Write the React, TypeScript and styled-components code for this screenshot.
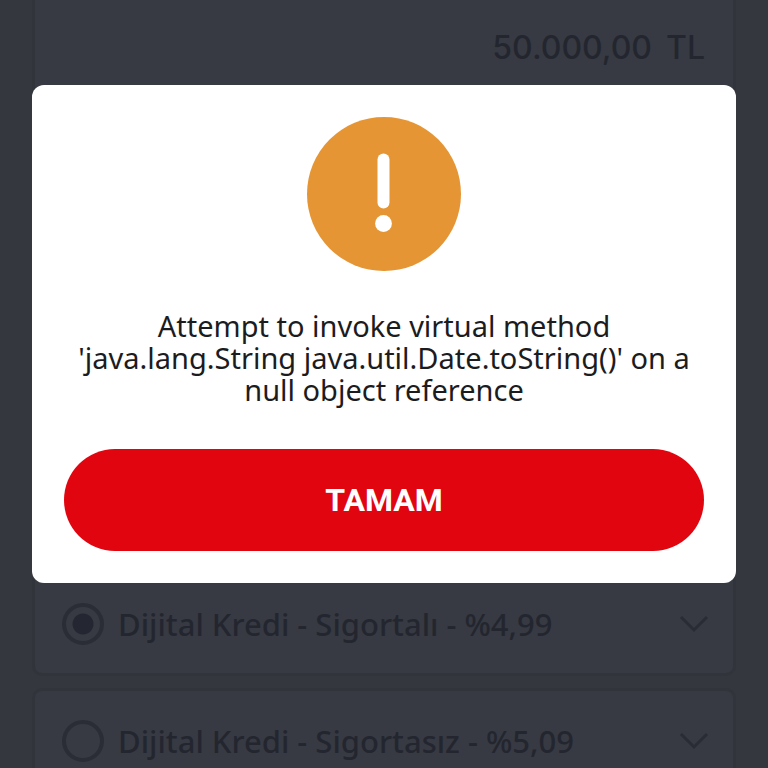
import React from "react";
import styled, { createGlobalStyle } from "styled-components";

const GlobalStyle = createGlobalStyle`
  *, *::before, *::after { box-sizing: border-box; }
  body {
    margin: 0;
    background: #35373f;
    font-family: "Noto Sans", "Open Sans", sans-serif;
  }
`;

const Screen = styled.main`
  height: 100vh;
  overflow: hidden;
  padding: 0 32px;
`;

const Card = styled.section`
  border: 3px solid #31343b;
  border-radius: 10px;
  background: #373a42;
  color: #23262f;
`;

const AmountCard = styled(Card)`
  height: 559px;
  padding: 24px 28px;
  border-top: 0;
  border-top-left-radius: 0;
  border-top-right-radius: 0;
  text-align: right;
  font-family: Inter, "Noto Sans", sans-serif;
  font-size: 32px;
  line-height: 48px;
  font-weight: 500;
`;

const Currency = styled.span`
  margin-left: 14px;
`;

const Option = styled(Card)`
  display: flex;
  align-items: center;
  height: 105px;
  margin-top: 12px;
  padding: 0 24px 0 27px;
`;

const OptionLabel = styled.label`
  display: flex;
  flex: 1;
  align-items: center;
  gap: 14px;
  font-size: 31px;
  line-height: 40px;
  font-weight: 500;
`;

const Radio = styled.input`
  appearance: none;
  flex: none;
  width: 42px;
  height: 42px;
  margin: 0;
  border: 4px solid #2a2d36;
  border-radius: 50%;
  &:checked {
    background: radial-gradient(circle, #242731 10px, transparent 11px);
  }
`;

const ExpandButton = styled.button`
  display: flex;
  padding: 0;
  border: 0;
  background: none;
  color: #292c35;
`;

const Overlay = styled.div`
  position: fixed;
  inset: 0;
  padding: 85px 32px 0;
`;

const Dialog = styled.div`
  display: flex;
  flex-direction: column;
  align-items: center;
  padding: 32px;
  border-radius: 12px;
  background: #fff;
`;

const Message = styled.p`
  margin: 39px 0 43px;
  color: #1c1c1e;
  font-size: 29px;
  line-height: 32px;
  font-weight: 400;
  text-align: center;
`;

const ConfirmButton = styled.button`
  width: 100%;
  height: 102px;
  border: 0;
  border-radius: 51px;
  background: #e10510;
  color: #fff;
  font-family: Roboto, "Noto Sans", sans-serif;
  font-size: 32px;
  line-height: 40px;
  font-weight: 700;
`;

const WarningIcon = () => (
  <svg width="154" height="154" viewBox="0 0 154 154" aria-hidden="true">
    <circle cx="77" cy="77" r="77" fill="#e59534" />
    <rect x="70.5" y="36.5" width="12" height="55" rx="6" fill="#fff" />
    <circle cx="76.5" cy="106.5" r="8.4" fill="#fff" />
  </svg>
);

const Chevron = () => (
  <svg width="30" height="18" viewBox="0 0 30 18" fill="none" stroke="currentColor" strokeWidth="3" aria-hidden="true">
    <path d="M2 2 L15 15 L28 2" />
  </svg>
);

const options = [
  { id: "insured", label: "Dijital Kredi - Sigortalı - %4,99" },
  { id: "uninsured", label: "Dijital Kredi - Sigortasız - %5,09" },
];

export default function App() {
  return (
    <>
      <GlobalStyle />
      <Screen>
        <AmountCard>
          50.000,00<Currency>TL</Currency>
        </AmountCard>
        {options.map((option, index) => (
          <Option key={option.id}>
            <OptionLabel htmlFor={option.id}>
              <Radio type="radio" name="credit" id={option.id} defaultChecked={index === 0} />
              {option.label}
            </OptionLabel>
            <ExpandButton type="button" aria-label={option.label}>
              <Chevron />
            </ExpandButton>
          </Option>
        ))}
      </Screen>
      <Overlay>
        <Dialog role="alertdialog" aria-modal="true" aria-describedby="message">
          <WarningIcon />
          <Message id="message">
            Attempt to invoke virtual method 'java.lang.String java.util.Date.toString()' on a null object reference
          </Message>
          <ConfirmButton type="button">TAMAM</ConfirmButton>
        </Dialog>
      </Overlay>
    </>
  );
}
